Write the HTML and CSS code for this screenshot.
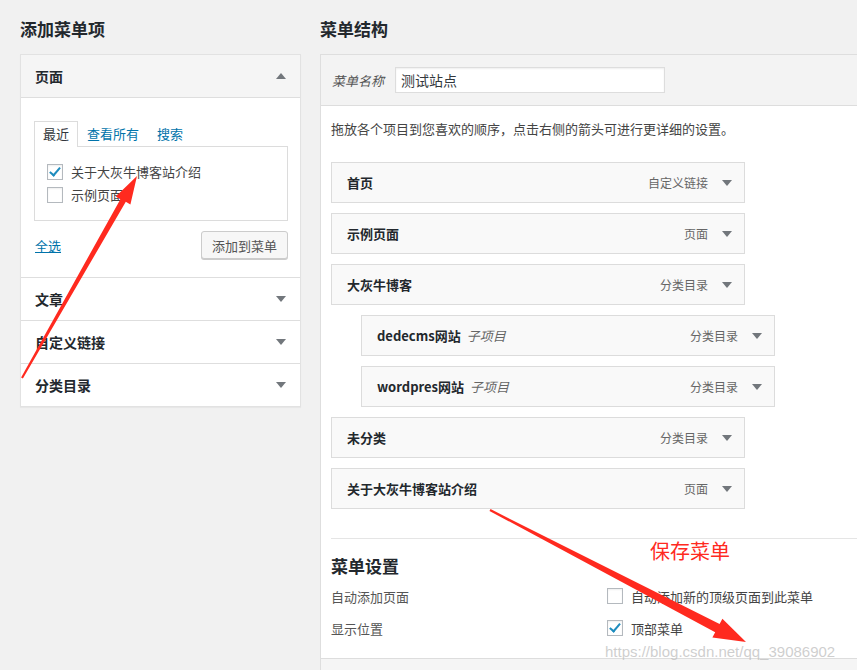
FILE: index.html
```html
<!DOCTYPE html>
<html lang="zh-CN">
<head>
<meta charset="utf-8">
<title>菜单</title>
<link rel="stylesheet" href="styles.css">
</head>
<body>
<div class="page">
  <div class="col-left">
    <h2 class="col-title">添加菜单项</h2>
    <div class="accordion">
      <div class="acc-section">
        <div class="acc-head"><span>页面</span><span class="tri tri-up"></span></div>
        <div class="acc-body">
          <div class="tabs">
            <span class="tab tab-active">最近</span>
            <a class="tab">查看所有</a>
            <a class="tab">搜索</a>
          </div>
          <div class="tab-panel">
            <label class="check-row"><span class="cb cb-checked"></span>关于大灰牛博客站介绍</label>
            <label class="check-row"><span class="cb"></span>示例页面</label>
          </div>
          <div class="acc-actions">
            <a class="select-all">全选</a>
            <button class="btn">添加到菜单</button>
          </div>
        </div>
      </div>
      <div class="acc-section"><div class="acc-head"><span>文章</span><span class="tri"></span></div></div>
      <div class="acc-section"><div class="acc-head"><span>自定义链接</span><span class="tri"></span></div></div>
      <div class="acc-section"><div class="acc-head"><span>分类目录</span><span class="tri"></span></div></div>
    </div>
  </div>

  <div class="col-right">
    <h2 class="col-title">菜单结构</h2>
    <div class="menu-box">
      <div class="menu-head">
        <span class="menu-name-label">菜单名称</span>
        <span class="menu-name-input">测试站点</span>
      </div>
      <div class="menu-body">
        <p class="hint">拖放各个项目到您喜欢的顺序，点击右侧的箭头可进行更详细的设置。</p>
        <ul class="menu-items">
          <li class="item"><span class="item-title">首页</span><span class="item-type">自定义链接</span><span class="tri"></span></li>
          <li class="item"><span class="item-title">示例页面</span><span class="item-type">页面</span><span class="tri"></span></li>
          <li class="item"><span class="item-title">大灰牛博客</span><span class="item-type">分类目录</span><span class="tri"></span></li>
          <li class="item item-child"><span class="item-title">dedecms网站</span><span class="item-sub">子项目</span><span class="item-type">分类目录</span><span class="tri"></span></li>
          <li class="item item-child"><span class="item-title">wordpres网站</span><span class="item-sub">子项目</span><span class="item-type">分类目录</span><span class="tri"></span></li>
          <li class="item"><span class="item-title">未分类</span><span class="item-type">分类目录</span><span class="tri"></span></li>
          <li class="item"><span class="item-title">关于大灰牛博客站介绍</span><span class="item-type">页面</span><span class="tri"></span></li>
        </ul>
        <div class="settings">
          <h3 class="settings-title">菜单设置</h3>
          <div class="settings-row">
            <span class="settings-label">自动添加页面</span>
            <label class="check-row"><span class="cb"></span>自动添加新的顶级页面到此菜单</label>
          </div>
          <div class="settings-row">
            <span class="settings-label">显示位置</span>
            <label class="check-row"><span class="cb cb-checked"></span>顶部菜单</label>
          </div>
        </div>
      </div>
      <div class="menu-foot"></div>
    </div>
  </div>
</div>

<svg class="annot" width="857" height="670" viewBox="0 0 857 670" aria-hidden="true">
  <polygon fill="#ff2a1f" points="21.1,377.5 120.4,199.2 115.8,196.6 137,176 130.4,204.6 125.8,201.8 22.9,378.5"/>
  <polygon fill="#ff2a1f" points="490.5,509.1 719.6,624.0 722.4,618.8 746,642 712.4,637.4 715.2,632.3 489.5,510.9"/>
</svg>
<span class="annot-text">保存菜单</span>
<span class="watermark">https://blog.csdn.net/qq_39086902</span>
</body>
</html>
```

FILE: styles.css
```css
html, body {
  margin: 0;
  padding: 0;
  background: #f1f1f1;
  overflow: hidden;
}
body {
  font-family: "Noto Sans CJK SC", "Liberation Sans", sans-serif;
  font-size: 13px;
  color: #444;
  position: relative;
  width: 857px;
  height: 670px;
}
.page {
  display: grid;
  grid-template-columns: 281px 1fr;
  column-gap: 19px;
  padding-left: 20px;
}
.col-title {
  margin: 17px 0 13px;
  font-size: 17px;
  line-height: 24px;
  font-weight: 700;
  color: #23282d;
}

/* left accordion */
.accordion {
  background: #fff;
  border: 1px solid #e2e2e2;
  box-shadow: 0 1px 1px rgba(0,0,0,.04);
}
.acc-section + .acc-section .acc-head {
  border-top: 1px solid #dedede;
}
.acc-head {
  height: 42px;
  display: flex;
  align-items: center;
  justify-content: space-between;
  padding: 0 14px 0 14px;
  font-size: 14px;
  font-weight: 700;
  color: #23282d;
}
.acc-section:first-child .acc-head {
  background: #f5f5f5;
  border-bottom: 1px solid #dedede;
}
.acc-body {
  padding: 23px 12px 18px 13px;
}
.tabs {
  display: flex;
  height: 25px;
}
.tab {
  display: block;
  height: 24px;
  padding: 0 8px;
  line-height: 24px;
  border: 1px solid transparent;
  border-bottom: none;
  color: #0073aa;
  font-size: 13px;
}
.tab-active {
  color: #32373c;
  border-color: #dcdcdc;
  background: #fff;
  height: 25px;
  position: relative;
  z-index: 1;
}
.tab-panel {
  border: 1px solid #dcdcdc;
  padding: 13px 12px 14px;
}
.check-row {
  display: flex;
  align-items: center;
  height: 23px;
  line-height: 23px;
  color: #444;
  font-size: 13px;
}
.cb {
  width: 14px;
  height: 14px;
  border: 1px solid #b4b9be;
  background: #fff;
  margin-right: 8px;
  box-shadow: inset 0 1px 2px rgba(0,0,0,.07);
  position: relative;
  flex: none;
}
.cb-checked::after {
  content: "";
  position: absolute;
  left: 4px;
  top: 0px;
  width: 4px;
  height: 9px;
  border: solid #1e8cbe;
  border-width: 0 2.5px 2.5px 0;
  transform: rotate(40deg);
}
.acc-actions {
  margin-top: 10px;
  display: flex;
  align-items: center;
  justify-content: space-between;
}
.select-all {
  color: #0073aa;
  text-decoration: underline;
  font-size: 13px;
  padding-left: 1px;
}
.btn {
  height: 28px;
  padding: 0 10px;
  font-family: inherit;
  font-size: 13px;
  color: #555;
  background: #f7f7f7;
  border: 1px solid #cccccc;
  border-radius: 3px;
  box-shadow: 0 1px 0 #cccccc;
}

/* triangles */
.tri {
  width: 0;
  height: 0;
  border-left: 5px solid transparent;
  border-right: 5px solid transparent;
  border-top: 6px solid #72777c;
  flex: none;
}
.tri-up {
  border-top: none;
  border-bottom: 6px solid #72777c;
}

/* right menu */
.menu-box {
  border: 1px solid #dedede;
  border-right: none;
  background: #fff;
}
.menu-head {
  height: 50px;
  background: #f3f3f3;
  border-bottom: 1px solid #dddddd;
  display: flex;
  align-items: center;
  padding-left: 11px;
}
.menu-name-label {
  font-style: italic;
  color: #555;
  font-size: 13px;
  margin-right: 11px;
}
.menu-name-input {
  width: 258px;
  height: 24px;
  line-height: 24px;
  padding: 0 5px;
  border: 1px solid #dddddd;
  background: #fff;
  color: #32373c;
  font-size: 14px;
  box-shadow: inset 0 1px 2px rgba(0,0,0,.07);
}
.menu-body {
  padding: 13px 0 14px 10px;
}
.hint {
  margin: 0 0 23px;
  line-height: 20px;
  font-size: 13px;
  color: #444;
}
.menu-items {
  list-style: none;
  margin: 0;
  padding: 0;
}
.item {
  height: 39px;
  border: 1px solid #dcdcdc;
  background: #f9f9f9;
  display: flex;
  align-items: center;
  padding: 0 12px 0 15px;
  box-sizing: content-box;
  width: 385px;
  margin-bottom: 10px;
}
.item-child {
  margin-left: 30px;
}
.item-title {
  font-weight: 700;
  color: #23282d;
  font-size: 13px;
}
.item-sub {
  font-style: italic;
  color: #666;
  margin-left: 6px;
}
.item-type {
  margin-left: auto;
  margin-right: 14px;
  color: #666;
  font-size: 12px;
}
.settings {
  margin-top: 29px;
  border-top: 1px solid #e5e5e5;
}
.settings-title {
  margin: 15px 0 2px;
  font-size: 17px;
  line-height: 24px;
  font-weight: 700;
  color: #23282d;
}
.settings-row {
  display: grid;
  grid-template-columns: 276px 1fr;
  align-items: center;
  height: 32px;
}
.settings-label {
  color: #555;
  font-size: 13px;
}
.menu-foot {
  height: 40px;
  background: #f5f5f5;
  border-top: 1px solid #dddddd;
}

/* annotations over the screenshot */
.annot {
  position: absolute;
  left: 0;
  top: 0;
  pointer-events: none;
}
.annot-text {
  position: absolute;
  left: 650px;
  top: 537px;
  font-size: 20px;
  line-height: 28px;
  color: #ff2a1f;
}
.watermark {
  position: absolute;
  left: 605px;
  top: 642px;
  font-family: "Liberation Sans", sans-serif;
  font-size: 15px;
  line-height: 20px;
  color: rgba(190,190,190,.75);
}
```
